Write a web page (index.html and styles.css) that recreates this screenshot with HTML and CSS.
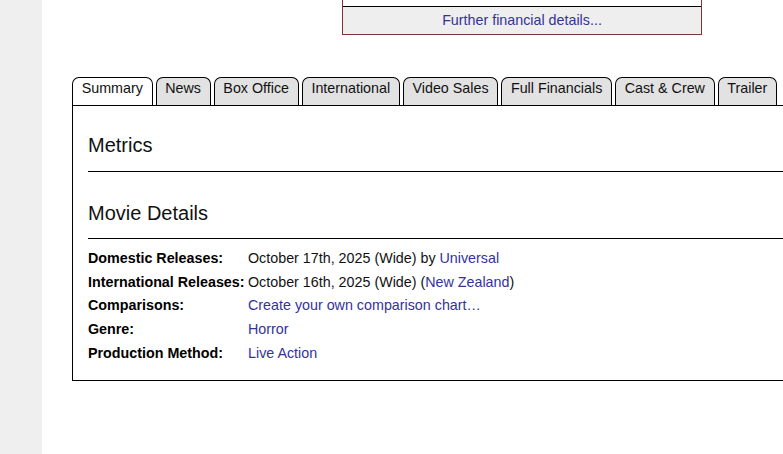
FILE: index.html
```html
<!DOCTYPE html>
<html lang="en">
<head>
<meta charset="utf-8">
<title>Movie Summary</title>
<link rel="stylesheet" href="styles.css">
</head>
<body>
<div class="page">
  <aside class="sidebar"></aside>
  <main class="main">
    <div class="fin-box">
      <div class="fin-top"></div>
      <div class="fin-link"><a href="#">Further financial details...</a></div>
    </div>

    <section class="tabbed">
      <nav class="tabs">
        <a class="tab active" href="#">Summary</a>
        <a class="tab" href="#">News</a>
        <a class="tab" href="#">Box Office</a>
        <a class="tab" href="#">International</a>
        <a class="tab" href="#">Video Sales</a>
        <a class="tab" href="#">Full Financials</a>
        <a class="tab" href="#">Cast &amp; Crew</a>
        <a class="tab" href="#">Trailer</a>
      </nav>
      <div class="panel">
        <h2 class="heading first">Metrics</h2>
        <hr class="rule">
        <h2 class="heading">Movie Details</h2>
        <hr class="rule">
        <div class="details">
          <div class="label">Domestic Releases:</div>
          <div class="value">October 17th, 2025 (Wide) by <a href="#">Universal</a></div>
          <div class="label">International Releases:</div>
          <div class="value">October 16th, 2025 (Wide) (<a href="#">New Zealand</a>)</div>
          <div class="label">Comparisons:</div>
          <div class="value"><a href="#">Create your own comparison chart…</a></div>
          <div class="label">Genre:</div>
          <div class="value"><a href="#">Horror</a></div>
          <div class="label">Production Method:</div>
          <div class="value"><a href="#">Live Action</a></div>
        </div>
      </div>
    </section>
  </main>
</div>
</body>
</html>
```
FILE: styles.css
```css
html, body {
  margin: 0;
  padding: 0;
  overflow: hidden;
  background: #ffffff;
}

body {
  font-family: "Liberation Sans", Arial, sans-serif;
  font-size: 14.3px;
  color: #111111;
}

a {
  color: #333399;
  text-decoration: none;
}

.page {
  display: flex;
  min-height: 454px;
}

.sidebar {
  width: 42px;
  flex: 0 0 42px;
  background: #efefef;
}

.main {
  flex: 1;
  padding-left: 30px;
}

.fin-box {
  width: 360px;
  margin-left: 270px;
  box-sizing: border-box;
  border: 1px solid #7f3434;
  border-top: none;
}

.fin-top {
  height: 6px;
  border-bottom: 1px solid #000000;
  background: #ffffff;
}

.fin-link {
  height: 27px;
  line-height: 27px;
  text-align: center;
  background: #eeeeee;
}

.tabbed {
  margin-top: 42px;
  width: 760px;
}

.tabs {
  display: flex;
  gap: 3px;
  align-items: flex-end;
}

.tab {
  display: block;
  padding: 2px 8.7px 9px;
  line-height: 16px;
  border: 1px solid #000000;
  border-bottom: none;
  border-radius: 7px 7px 0 0;
  background: #e2e2e2;
  color: #111111;
  white-space: nowrap;
}

.tab.active {
  background: #ffffff;
}

.panel {
  border: 1px solid #000000;
  padding: 0 15px 15px;
}

.heading {
  font-size: 20px;
  font-weight: normal;
  line-height: 24px;
  margin: 29px 0 13px;
  color: #111111;
}

.heading.first {
  margin-top: 27px;
  margin-bottom: 14px;
}

.rule {
  border: 0;
  border-top: 1px solid #000000;
  margin: 0;
  height: 0;
}

.details {
  display: grid;
  grid-template-columns: 160px auto;
  grid-auto-rows: 23.75px;
  align-items: center;
  margin-top: 7px;
}

.label {
  font-weight: bold;
  color: #000000;
  white-space: nowrap;
}

.value {
  color: #111111;
  white-space: nowrap;
}
```
